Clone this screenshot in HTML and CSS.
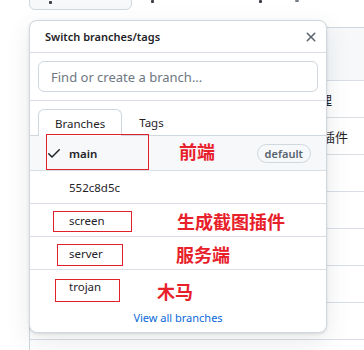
FILE: index.html
```html
<!DOCTYPE html>
<html lang="zh-cn">
  <head>
    <meta charset="UTF-8" />
    <meta name="viewport" content="width=device-width, initial-scale=1.0" />
    <title>Switch branches</title>
    <link rel="stylesheet" href="styles.css">
  </head>
  <body>
    <div class="page">
      <!-- 顶部按钮（被裁掉了上半部分） -->
      <div class="topbar">
        <div class="branch-btn"><span class="tick t1"></span></div>
        <span class="tick t2"></span>
        <span class="tick t3"></span>
        <span class="tick t4"></span>
      </div>

      <!-- 背后的文件列表 -->
      <div class="files">
        <div class="files-head"></div>
        <div class="files-row"><span class="msg msg1">代理</span></div>
        <div class="files-row"><span class="msg msg2">截图插件</span></div>
        <div class="files-row"></div>
        <div class="files-row"></div>
        <div class="files-row"></div>
        <div class="files-row"></div>
        <div class="files-row"></div>
        <div class="files-row"></div>
      </div>

      <!-- 分支弹窗 -->
      <div class="popup">
        <div class="popup-head">
          <span class="title">Switch branches/tags</span>
          <svg class="close" width="16" height="16" viewBox="0 0 16 16"><path d="M3.72 3.72a.75.75 0 0 1 1.06 0L8 6.94l3.22-3.22a.749.749 0 0 1 1.275.326.749.749 0 0 1-.215.734L9.06 8l3.22 3.22a.749.749 0 0 1-.326 1.275.749.749 0 0 1-.734-.215L8 9.06l-3.22 3.22a.751.751 0 0 1-1.042-.018.751.751 0 0 1-.018-1.042L6.94 8 3.72 4.78a.75.75 0 0 1 0-1.06Z"/></svg>
        </div>
        <div class="filter">
          <div class="input">Find or create a branch...</div>
        </div>
        <div class="tabs">
          <span class="tab active">Branches</span>
          <span class="tab">Tags</span>
        </div>
        <ul class="list">
          <li class="item current">
            <svg class="check" width="16" height="16" viewBox="0 0 16 16"><path d="M13.78 4.22a.75.75 0 0 1 0 1.06l-7.25 7.25a.75.75 0 0 1-1.06 0L2.22 9.28a.751.751 0 0 1 .018-1.042.751.751 0 0 1 1.042-.018L6 10.94l6.72-6.72a.75.75 0 0 1 1.060 0Z"/></svg>
            <span class="name">main</span>
            <span class="badge">default</span>
          </li>
          <li class="item"><span class="name">552c8d5c</span></li>
          <li class="item"><span class="name">screen</span></li>
          <li class="item"><span class="name">server</span></li>
          <li class="item"><span class="name">trojan</span></li>
        </ul>
        <div class="foot"><a href="javascript:;">View all branches</a></div>
      </div>

      <!-- 红色标注 -->
      <div class="mark-box b1"></div>
      <div class="mark-box b2"></div>
      <div class="mark-box b3"></div>
      <div class="mark-box b4"></div>
      <div class="note n1">前端</div>
      <div class="note n2">生成截图插件</div>
      <div class="note n3">服务端</div>
      <div class="note n4">木马</div>
    </div>
  </body>
</html>
```

FILE: styles.css
```css
* {
  margin: 0;
  padding: 0;
  box-sizing: border-box;
}
body {
  background: #fff;
  font-family: "Noto Sans", "Noto Sans CJK SC", sans-serif;
  color: #1f2328;
  overflow: hidden;
}
.page {
  position: relative;
  width: 364px;
  height: 350px;
  overflow: hidden;
}
.topbar {
  height: 10px;
  padding-left: 29px;
  display: flex;
  align-items: flex-end;
  position: relative;
}
.branch-btn {
  width: 103px;
  height: 30px;
  background: #f6f8fa;
  border: 1px solid #d0d7de;
  border-radius: 6px;
  position: relative;
}
.tick {
  position: absolute;
  top: 0;
  width: 3px;
  height: 3px;
  background: #3a3f45;
  border-radius: 1px;
}
.t1 { left: 19px; top: 20px; }
.t2 { left: 151px; }
.t3 { left: 259px; }
.t4 { left: 295px; width: 4px; height: 2px; background: #7a8088; }

.files {
  margin-top: 17px;
  margin-left: 29px;
  border-left: 1px solid #d0d7de;
  border-top: 1px solid #d0d7de;
  border-top-left-radius: 6px;
}
.files-head {
  height: 53px;
  background: #f6f8fa;
  border-bottom: 1px solid #d8dee4;
}
.files-row {
  height: 37px;
  border-bottom: 1px solid #d8dee4;
  display: flex;
  align-items: center;
  font-size: 13px;
  font-family: "Noto Sans CJK SC", sans-serif;
}
.msg1 { margin-left: 276px; }
.msg2 { margin-left: 266px; }

/* 弹窗 */
.popup {
  position: absolute;
  left: 29px;
  top: 20px;
  width: 298px;
  height: 313px;
  background: #fff;
  border: 1px solid #d0d7de;
  border-radius: 8px;
  box-shadow: 0 1px 3px rgba(31, 35, 40, 0.12), 0 8px 24px rgba(66, 74, 83, 0.12);
  display: flex;
  flex-direction: column;
}
.popup-head {
  height: 32px;
  border-bottom: 1px solid #d8dee4;
  display: flex;
  align-items: center;
  justify-content: space-between;
  padding: 0 7px 0 15px;
}
.title {
  font-size: 11px;
  font-weight: 600;
}
.close {
  fill: #59636e;
}
.filter {
  padding: 8px 8px 8px;
  border-bottom: 1px solid #d8dee4;
}
.input {
  height: 31px;
  border: 1px solid #d0d7de;
  border-radius: 6px;
  padding-left: 12px;
  display: flex;
  align-items: center;
  font-size: 13px;
  color: #6e7781;
}
.tabs {
  padding: 8px 8px 0;
  display: flex;
  border-bottom: 1px solid #d0d7de;
}
.tab {
  height: 26px;
  padding: 0 16px;
  font-size: 11.5px;
  display: flex;
  align-items: center;
  color: #1f2328;
  border: 1px solid transparent;
  border-bottom: 0;
}
.tab.active {
  border-color: #d0d7de;
  border-radius: 6px 6px 0 0;
  background: #fff;
  margin-bottom: -1px;
  height: 27px;
}
.list {
  list-style: none;
}
.item {
  height: 33px;
  border-bottom: 1px solid #d8dee4;
  display: flex;
  align-items: center;
  padding: 0 15px 0 39px;
  font-size: 11.5px;
}
.item:last-child {
  border-bottom: 0;
}
.item.current {
  height: 35px;
  background: #f6f8fa;
  padding-left: 16px;
}
.check {
  fill: #1f2328;
  margin-right: 7px;
}
.current .name {
  font-weight: 600;
}
.badge {
  margin-left: auto;
  height: 19px;
  padding: 0 7px;
  border: 1px solid #d0d7de;
  border-radius: 10px;
  font-size: 11px;
  font-weight: 600;
  color: #59636e;
  display: flex;
  align-items: center;
}
.foot {
  flex: 1;
  display: flex;
  align-items: center;
  justify-content: center;
  font-size: 11px;
}
.foot a {
  color: #0969da;
  text-decoration: none;
}

/* 标注 */
.mark-box {
  position: absolute;
  border: 1px solid #e0202a;
}
.b1 { left: 46px; top: 134px; width: 103px; height: 36px; }
.b2 { left: 53px; top: 211px; width: 79px; height: 21px; }
.b3 { left: 57px; top: 244px; width: 66px; height: 22px; }
.b4 { left: 55px; top: 279px; width: 65px; height: 23px; }
.note {
  position: absolute;
  font-family: "Noto Sans CJK SC", sans-serif;
  font-size: 18px;
  line-height: 18px;
  font-weight: 700;
  color: #e8202a;
}
.n1 { left: 179px; top: 142px; }
.n2 { left: 177px; top: 212px; }
.n3 { left: 176px; top: 245px; }
.n4 { left: 157px; top: 282px; }
```
